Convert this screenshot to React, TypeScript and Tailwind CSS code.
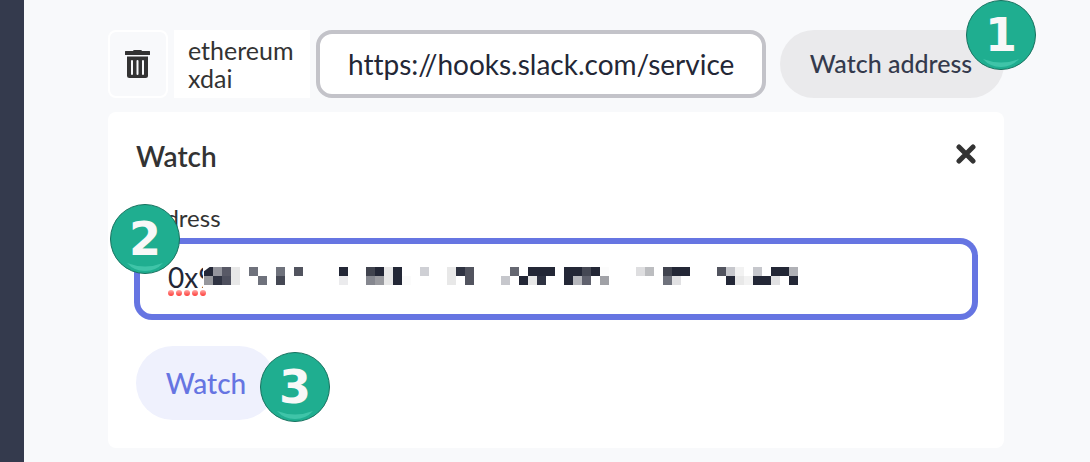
import type { ReactNode } from "react";

const INK = "#232736";

// [column, row, colour] of each 9px block that hides the address
const blocks: [number, number, string][] = [
  [0, 0, INK], [1, 0, "#93949c"], [2, 0, "#585966"], [3, 0, "#e8e8e8"],
  [0, 1, "#96979c"], [1, 1, "#2f3342"], [2, 1, "#4e505e"], [3, 1, "#e8e8e8"],
  [5, 0, "#6f727c"], [6, 1, "#6f727c"], [8, 0, "#6f727c"], [8, 1, "#454854"], [10, 0, "#52545f"],
  [15, 0, INK], [15, 1, "#ebebed"],
  [18, 0, "#40434e"], [18, 1, "#85878f"], [19, 0, INK], [19, 1, "#9a9ba0"],
  [20, 0, "#e8e8e8"], [20, 1, "#e8e8e8"], [21, 0, INK], [21, 1, INK], [22, 1, "#fbfbfb"],
  [24, 0, "#cfd0d5"],
  [27, 0, "#e8e8e8"], [27, 1, "#e8e8e8"], [28, 0, "#2f3342"], [29, 0, "#52545f"], [29, 1, "#52545f"],
  [33, 1, "#c6c7cc"], [34, 0, "#666872"], [35, 1, INK], [36, 0, INK], [36, 1, "#e8e8e8"],
  [37, 0, INK], [37, 1, "#2f3342"], [38, 0, INK],
  [40, 0, INK], [40, 1, INK], [41, 0, INK], [41, 1, "#b6b7bc"], [42, 0, "#454854"], [42, 1, "#5f616d"],
  [43, 0, INK], [44, 0, "#fcfcfc"], [44, 1, "#a0a1a6"],
  [48, 0, "#dedee0"], [49, 0, "#bcbdc0"],
  [51, 0, "#40434e"], [51, 1, "#6f727c"], [52, 0, INK], [52, 1, "#e1e1e3"], [53, 0, INK],
  [57, 0, "#52545f"], [58, 0, "#c6c7cc"], [58, 1, INK], [59, 0, "#f2f2f2"], [59, 1, "#e8e8e8"],
  [60, 1, "#f2f2f2"], [61, 0, "#c6c7cc"], [61, 1, INK], [62, 1, INK], [63, 0, INK], [63, 1, "#e1e1e3"],
  [64, 0, INK], [65, 0, "#b0b1b6"], [65, 1, INK],
];

function Redaction() {
  return (
    <svg
      className="pointer-events-none absolute top-[18px] left-8"
      width="632"
      height="40"
      viewBox="0 0 632 40"
      aria-hidden="true"
    >
      <defs>
        <linearGradient id="dot" x1="0" y1="0" x2="0" y2="1">
          <stop offset="0" stopColor="#ffaaa8" />
          <stop offset="1" stopColor="#ff3b36" />
        </linearGradient>
      </defs>
      <rect x="35" y="0" width="597" height="32" fill="#fff" />
      <g shapeRendering="crispEdges">
        {blocks.map(([col, row, fill]) => (
          <rect key={`${col}-${row}`} x={36 + col * 9} y={9 + row * 9} width="9" height="9" fill={fill} />
        ))}
      </g>
      <path d="M35 8h8l-8 6z" fill="#fff" />
      {[3, 11, 19, 27, 35].map((x) => (
        <circle key={x} cx={x} cy="35" r="3" fill="url(#dot)" />
      ))}
    </svg>
  );
}

function Badge({ children, place }: { children: ReactNode; place: string }) {
  return (
    <span
      className={`pointer-events-none absolute z-10 flex size-[70px] items-center justify-center rounded-full border border-[#17725f] bg-[#1fae90] font-['DejaVu_Sans',sans-serif] text-[46px] leading-none font-bold text-[#f8f8f8] ${place}`}
    >
      {children}
      <svg className="absolute bottom-0.5 left-4" width="36" height="8" viewBox="0 0 36 8" aria-hidden="true">
        <path d="M0 0Q18 7 36 0Q29 8 18 8Q7 8 0 0Z" fill="#3fc4a8" />
      </svg>
    </span>
  );
}

function TrashIcon() {
  return (
    <svg width="26" height="28" viewBox="0 0 26 28" aria-hidden="true">
      <path
        d="M8 1Q8 0 9.500 0H15.500Q17 0 17 1H24.500Q25 1 25 1.500V4.500Q25 5 24.500 5H.5Q0 5 0 4.500V1.500Q0 1 .5 1Z"
        fill="#333"
      />
      <path d="M2 6.500H23V25.500Q23 28 20.500 28H4.500Q2 28 2 25.500Z" fill="#333" />
      <path d="M7 11V24M12.500 11V24M18 11V24" stroke="#f8f9fb" strokeWidth="2" strokeLinecap="round" />
    </svg>
  );
}

export default function App() {
  return (
    <div className="flex min-h-screen bg-[#f8f9fb] font-['Lato',sans-serif] text-[#333] [font-variant-ligatures:none]">
      <aside className="w-6 shrink-0 bg-[#343a4d]" />
      <main className="min-w-0 flex-1 pt-[30px] pr-[86px] pb-3.5 pl-[84px]">
        <div className="flex h-[68px] gap-1.5">
          <button
            type="button"
            aria-label="Delete"
            className="flex w-[60px] shrink-0 items-center justify-center rounded-lg border-2 border-white"
          >
            <TrashIcon />
          </button>
          <div className="w-[136px] shrink-0 bg-white px-3.5 py-1.5 text-[25px] leading-7">
            <div>ethereum</div>
            <div>xdai</div>
          </div>
          <input
            type="text"
            aria-label="Webhook URL"
            defaultValue="https://hooks.slack.com/services/"
            className="min-w-0 flex-1 rounded-2xl border-4 border-[#c3c3c9] bg-white px-7 text-[28px] text-[#232736] outline-none"
          />
          <div className="relative ml-2 flex w-56 shrink-0">
            <button
              type="button"
              className="flex-1 rounded-full bg-[#eaeaec] pr-0.5 text-[25px] font-medium text-[#343a4d]"
            >
              Watch address
            </button>
            <Badge place="-top-[30px] -right-8">1</Badge>
          </div>
        </div>

        <section className="mt-3.5 rounded-lg bg-white px-7 pt-7 pb-7">
          <div className="flex items-start justify-between">
            <h2 className="text-[28px] leading-8 font-semibold">Watch</h2>
            <button type="button" aria-label="Close" className="pt-1">
              <svg width="20" height="20" viewBox="0 0 20 20" aria-hidden="true">
                <path d="M3 3L17 17M17 3L3 17" stroke="#333" strokeWidth="5" strokeLinecap="round" />
              </svg>
            </button>
          </div>

          <label htmlFor="address" className="mt-8 block text-2xl leading-7">
            Address
          </label>
          <div className="relative mt-2">
            <input
              id="address"
              type="text"
              defaultValue="0x9"
              spellCheck={false}
              className="block h-[78px] w-full rounded-2xl border-4 border-[#6675e2] bg-white px-7 pb-1 text-[28px] text-[#232736] ring-2 ring-[#6675e2] outline-none"
            />
            <Redaction />
            <Badge place="-top-9 -left-[26px]">2</Badge>
          </div>

          <div className="relative mt-7 flex w-[140px]">
            <button
              type="button"
              className="h-[74px] flex-1 rounded-full bg-[#eff1fd] text-[28px] font-medium text-[#6675e2]"
            >
              Watch
            </button>
            <Badge place="top-1.5 left-[124px]">3</Badge>
          </div>
        </section>
      </main>
    </div>
  );
}
